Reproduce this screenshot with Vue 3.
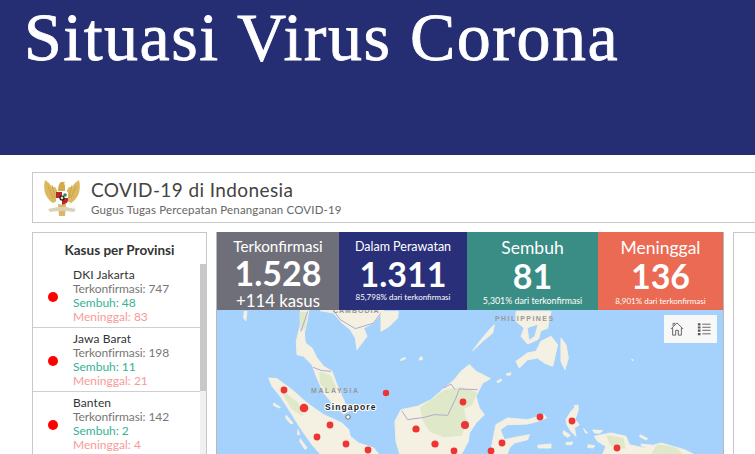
<template>
  <div class="page">
    <header class="banner">
      <h1>Situasi Virus Corona</h1>
    </header>

    <main class="dashboard">
      <section class="title-card">
        <svg class="emblem" viewBox="0 0 36 40" aria-hidden="true">
          <path d="M1 2C-.5 7 0 15 3 19c2 3 4 5 6 6l4-2V12l-2-3H8L5 5z" fill="#dcb860" />
          <path d="M35 2c1.500 5 1 13-2 17-2 3-4 5-6 6l-4-2V12l2-3h3l3-4z" fill="#dcb860" />
          <path d="M4 8 9 20M8 7l3 13M32 8l-5 12M28 7l-3 13" stroke="#c49d45" stroke-width=".8" fill="none" />
          <path d="M14 13c0-4 1-8 3-9h4l-1 2 1 1v6z" fill="#d3a94c" />
          <path d="M14 26h8l-1 12h-6z" fill="#dcb860" />
          <path d="M4 31l10-2h8l10 2-2 3-8-1h-8l-8 1z" fill="#d8d3b8" />
          <path d="M12 14h12v8c0 3-3 4-6 5-3-1-6-2-6-5z" fill="#fff" />
          <path d="M12 14h6v6h-6zM18 20h6v2c0 3-3 4-6 5z" fill="#b8272c" />
          <circle cx="21" cy="17" r="1.800" fill="#2e8b4f" />
          <circle cx="18" cy="20" r="2" fill="#f3d98d" stroke="#1b1b1b" stroke-width="1.200" />
        </svg>
        <div class="title-text">
          <h2>COVID-19 di Indonesia</h2>
          <p>Gugus Tugas Percepatan Penanganan COVID-19</p>
        </div>
      </section>

      <div class="columns">
        <aside class="province-card">
          <h3>Kasus per Provinsi</h3>
          <div class="province-scroll">
            <ul class="province-list">
              <li v-for="item in provinces" :key="item.name" class="province">
                <span class="dot"></span>
                <div class="province-text">
                  <div class="name">{{ item.name }}</div>
                  <div class="confirmed">Terkonfirmasi: {{ item.confirmed }}</div>
                  <div class="recovered">Sembuh: {{ item.recovered }}</div>
                  <div class="died">Meninggal: {{ item.died }}</div>
                </div>
              </li>
            </ul>
            <div class="scrollbar"><div class="thumb"></div></div>
          </div>
        </aside>

        <section class="center-card">
          <div class="stats">
            <div class="stat grey">
              <div class="stat-label">Terkonfirmasi</div>
              <div class="stat-value">1.528</div>
              <div class="stat-extra">+114 kasus</div>
            </div>
            <div class="stat navy">
              <div class="stat-label small-label">Dalam Perawatan</div>
              <div class="stat-value">1.311</div>
              <div class="stat-note navy-note">85,798% dari terkonfirmasi</div>
            </div>
            <div class="stat teal">
              <div class="stat-label big-label">Sembuh</div>
              <div class="stat-value">81</div>
              <div class="stat-note teal-note">5,301% dari terkonfirmasi</div>
            </div>
            <div class="stat coral">
              <div class="stat-label big-label">Meninggal</div>
              <div class="stat-value">136</div>
              <div class="stat-note">8,901% dari terkonfirmasi</div>
            </div>
          </div>

          <div class="map">
            <svg class="map-svg" viewBox="0 0 506 150" aria-label="Peta Indonesia">
              <rect width="506" height="150" fill="#a5d2fd" />
              <!-- west part, traced at 3x from x 216 -->
              <g transform="translate(0 -2) scale(.3333)">
                <path class="land" d="M250 8 275 8 270 40 262 75 265 105 285 120 300 150 320 175 345 190 358 225 375 265 395 310 380 318 350 290 320 255 300 210 285 170 260 145 240 140 238 100 245 70 255 35z" />
                <path class="land" d="M310 8 500 8 470 45 440 60 450 85 420 125 415 90 400 65 375 45 350 15z" />
                <path class="land" d="M155 210 180 212 225 245 270 285 320 320 375 345 395 365 400 385 425 405 470 420 495 450 320 450 285 410 250 360 225 320 190 265 165 235z" />
                <path class="green" d="M310 195 340 205 355 240 335 250 312 225zM195 250 240 285 255 320 225 300z" />
                <path class="green" d="M250 15 270 15 262 60 252 65z" />
                <path class="land" d="M82 10 90 10 86 38 80 30zM170 285 190 298 186 300 170 292zM208 322 228 345 222 348 206 330zM243 365 248 380 242 380zM250 392 270 420 264 424 248 400z" />
                <path class="line" d="M272 10 252 70M288 178 315 188 342 190M350 8 370 35 415 62 470 45 495 10" />
              </g>
              <!-- middle part, traced at 3x from x 380 -->
              <g transform="translate(164 -2) scale(.3333)">
                <path class="land" d="M0 10 52 10 50 30 25 55 0 70z" />
                <path class="land" d="M265 170 285 190 328 212 305 225 295 245 285 265 295 300 310 320 285 345 265 375 262 400 235 450 60 450 45 400 42 340 60 305 110 295 150 275 190 240 220 215 240 190z" />
                <path class="green" d="M120 300 190 250 240 240 285 255 270 290 245 300 255 340 240 380 190 385 150 370 130 340z" />
                <path class="land" d="M345 350 380 330 440 335 490 320 497 330 470 340 440 348 380 350 358 365 370 395 420 385 445 380 440 395 400 405 385 420 375 450 325 450 335 400z" />
                <path class="land" d="M340 50 335 75 305 100 275 128 300 95 330 60zM405 160 440 135 465 130 480 100 510 85 530 110 515 175 490 165 470 150 440 155 415 180zM405 10 510 10 500 60 470 95 440 108 420 85 430 60 405 40z" />
                <path class="water" d="M440 60 470 50 460 85 445 95zM480 70 498 62 490 90 475 92z" />
                <path class="land" d="M58 155 72 148 74 152 60 158zM115 150 123 146 124 155 116 156zM348 220 360 213 362 218 350 224zM375 198 390 194 388 201 378 202zM470 412 510 408 510 420 472 420z" />
                <path class="line" d="M62 308 80 335 130 328 160 320 200 322 225 270 235 243 290 245M188 240 210 228 222 245" />
              </g>
              <!-- east part, traced at 3x from x 550 -->
              <g transform="translate(334 -2) scale(.3333)">
                <path class="land" d="M30 90 45 110 52 150 42 185 30 160z" />
                <path class="land" d="M45 335 60 310 80 290 82 305 72 335 85 350 70 360 75 385 60 370 48 350z" />
                <path class="land" d="M130 385 180 375 225 385 235 410 280 420 330 405 400 425 450 450 150 450 165 415 140 400z" />
                <path class="green" d="M320 412 370 420 400 445 300 445zM170 385 215 392 220 420 180 410z" />
                <path class="land" d="M125 366 155 368 145 376 130 374zM98 362 110 375 104 375zM268 380 290 392 285 396 266 386zM270 408 305 412 300 418 272 414zM112 410 132 414 125 420 110 418zM38 368 58 382 50 388 36 378zM45 404 65 402 62 410 46 410zM70 292 78 294 72 300zM242 155 246 155 245 159z" />
              </g>

              <text class="country" x="116" y="3">CAMBODIA</text>
              <text class="country wide" x="278" y="11">PHILIPPINES</text>
              <text class="country wider" x="94" y="83">MALAYSIA</text>
              <text class="city" x="108" y="100">Singapore</text>
              <circle cx="131" cy="107" r="2.200" fill="#fff" stroke="#555" stroke-width=".8" />

              <circle v-for="(c, i) in cases" :key="i" class="case" :cx="c[0]" :cy="c[1]" :r="c[2]" />
            </svg>

            <div class="map-tools">
              <svg class="tool" viewBox="0 0 16 16" aria-hidden="true">
                <path d="M1 8 8 1l7 7M3 6.500V15h3.500V9.500h3V15H13V6.500M3.500 4.500V1.500h2v1.300" />
              </svg>
              <svg class="tool" viewBox="0 0 16 16" aria-hidden="true">
                <path d="M6 2.500h9.500M6 6h9.500M6 9.500h9.500M6 13.500h9.500" />
                <path class="tool-fill" d="M1 1.500h3v2.500H1zM1 5h3v2.500H1zM1 8.500h3V11H1zM1 12.500h3V15H1z" />
              </svg>
            </div>
          </div>
        </section>

        <section class="right-card"></section>
      </div>
    </main>
  </div>
</template>

<script setup>
const provinces = [
  { name: 'DKI Jakarta', confirmed: 747, recovered: 48, died: 83 },
  { name: 'Jawa Barat', confirmed: 198, recovered: 11, died: 21 },
  { name: 'Banten', confirmed: 142, recovered: 2, died: 4 },
]

// x, y, radius inside the map
const cases = [
  [67, 80, 3.4],
  [87, 98, 4.3],
  [113, 115, 3.4],
  [100, 127, 3.4],
  [129, 134, 3.4],
  [151, 140, 3.4],
  [169, 83, 3.2],
  [246, 92, 3.4],
  [248, 115, 4],
  [199, 119, 3.6],
  [218, 134, 3.6],
  [237, 141, 3.4],
  [274, 141, 3.4],
  [285, 133, 3.4],
  [323, 107, 3.4],
  [355, 111, 3.4],
  [400, 138, 3.4],
]
</script>

<style>
html,
body {
  margin: 0;
  overflow: hidden;
  background: #fff;
}
</style>

<style scoped>
.page {
  height: 454px;
  overflow: hidden;
  font-family: Lato, 'Open Sans', sans-serif;
}
.banner {
  box-sizing: border-box;
  height: 155px;
  padding: 3px 0 0 24px;
  background: #252d73;
}
h1 {
  margin: 0;
  font-family: 'Liberation Serif', serif;
  font-size: 68px;
  font-weight: 400;
  line-height: 68px;
  letter-spacing: 1.5px;
  color: #fff;
  white-space: nowrap;
  -webkit-text-stroke: 0.8px #fff;
}
.dashboard {
  padding: 17px 0 0 32px;
}
.title-card {
  display: flex;
  align-items: center;
  height: 51px;
  box-sizing: border-box;
  margin-bottom: 9px;
  padding-left: 11px;
  border: 1px solid #c8c8c8;
  border-right: 0;
}
.emblem {
  width: 36px;
  height: 40px;
  margin-right: 11px;
}
h2 {
  margin: 0;
  font-size: 19px;
  font-weight: 400;
  line-height: 23px;
  letter-spacing: 0.4px;
  color: #444;
}
.title-text p {
  margin: 2px 0 0;
  font-size: 11.5px;
  line-height: 14px;
  letter-spacing: 0.16px;
  color: #666;
}
.columns {
  display: flex;
  gap: 9px;
}
.province-card {
  flex: 0 0 175px;
  box-sizing: border-box;
  height: 240px;
  border: 1px solid #c8c8c8;
}
h3 {
  margin: 0;
  height: 31px;
  font-size: 13.5px;
  font-weight: 700;
  line-height: 35px;
  text-align: center;
  color: #333;
}
.province-scroll {
  display: flex;
}
.province-list {
  flex: 1;
  margin: 0;
  padding: 0;
  list-style: none;
}
.province {
  display: flex;
  align-items: center;
  height: 63px;
  border-bottom: 1px solid #d0d0d0;
}
.dot {
  width: 10px;
  height: 10px;
  margin: 2px 15px 0;
  border-radius: 50%;
  background: #f00;
}
.province-text {
  font-size: 12px;
  line-height: 14px;
}
.name {
  letter-spacing: 0.1px;
  color: #333;
}
.confirmed {
  letter-spacing: -0.1px;
  color: #777;
}
.recovered {
  color: #35b294;
}
.died {
  color: #f59a9a;
}
.scrollbar {
  flex: 0 0 6px;
  height: 240px;
  background: #f0f0f0;
}
.thumb {
  height: 127px;
  background: #c8c8c8;
}
.center-card {
  flex: 0 0 508px;
  box-sizing: border-box;
  border: 1px solid #b8b8b8;
  border-width: 0 1px;
}
.stats {
  display: grid;
  grid-template-columns: 122px 128px 131px 125px;
  height: 78px;
  color: #fff;
  text-align: center;
}
.stat {
  overflow: hidden;
  white-space: nowrap;
}
.grey {
  background: #6f6f7a;
}
.navy {
  background: #2a2f7a;
}
.teal {
  background: #3a8d84;
}
.coral {
  background: #ea6a53;
}
.stat-label {
  padding-top: 5px;
  font-size: 15.2px;
  line-height: 18px;
  font-weight: 400;
}
.small-label {
  padding-top: 6px;
  font-size: 12.5px;
}
.big-label {
  font-size: 17.5px;
  line-height: 21px;
}
.stat-value {
  font-size: 34px;
  font-weight: 700;
  line-height: 36px;
}
.stat-extra {
  font-size: 16.800px;
  line-height: 19px;
}
.stat-note {
  font-size: 8px;
  line-height: 12px;
  padding-top: 1px;
}
.navy-note {
  margin-top: -1px;
  padding-top: 0;
}
.teal-note {
  font-size: 8.800px;
}
.map {
  position: relative;
  height: 150px;
}
.map-svg {
  display: block;
  width: 506px;
  height: 150px;
}
.land {
  fill: #f4f0e2;
  stroke: #f4f0e2;
  stroke-width: 3;
  stroke-linejoin: round;
}
.green {
  fill: #dfe8c9;
  stroke: #dfe8c9;
  stroke-width: 6;
  stroke-linejoin: round;
}
.water {
  fill: #a5d2fd;
}
.line {
  fill: none;
  stroke: #b5a8cf;
  stroke-width: 3;
}
.country {
  font-family: 'Liberation Sans', sans-serif;
  font-size: 7px;
  font-weight: 700;
  letter-spacing: 1px;
  fill: #999;
}
.wide {
  letter-spacing: 1.450px;
}
.wider {
  letter-spacing: 1.600px;
}
.city {
  font-family: 'Liberation Sans', sans-serif;
  font-size: 8.500px;
  font-weight: 700;
  letter-spacing: 1.100px;
  fill: #222;
  stroke: #fff;
  stroke-width: 2px;
  paint-order: stroke;
}
.case {
  fill: #ef3434;
}
.map-tools {
  position: absolute;
  top: 5px;
  right: 6px;
  display: flex;
  align-items: center;
  justify-content: space-around;
  width: 53px;
  height: 28px;
  background: #f8f8f8;
}
.tool {
  width: 14px;
  height: 14px;
  fill: none;
  stroke: #555;
  stroke-width: 1;
}
.tool-fill {
  fill: #555;
  stroke: none;
}
.right-card {
  flex: 1;
  border: 1px solid #c8c8c8;
  border-right: 0;
  border-bottom: 0;
}
</style>
